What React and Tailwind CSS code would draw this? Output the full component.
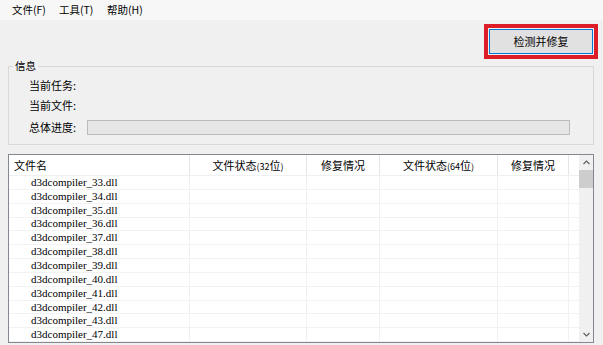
import React from "react";

const files = ["33","34","35","36","37","38","39","40","41","42","43","47"];

const cjk = { fontFamily: '"Noto Sans CJK SC", "Microsoft YaHei", sans-serif' };

function Head({ a, b }) {
  return (
    <span>
      文件状态<span className="text-[9px]">({a}</span>位<span className="text-[9px]">)</span>
    </span>
  );
}

export default function App() {
  return (
    <div className="w-[603px] h-[345px] bg-[#f0f0f0] overflow-hidden text-black text-[11px] leading-none" style={cjk}>
      {/* menu bar */}
      <div className="h-[20px] bg-[#f7f7f7] flex items-center pl-[12px] text-[10.5px]">
        <span className="w-[47px]">文件(F)</span>
        <span className="w-[48px]">工具(T)</span>
        <span>帮助(H)</span>
      </div>
      {/* button row */}
      <div className="flex justify-end pr-[5px] pt-[4px]">
        <div className="border-[4px] border-[#dc1c27] p-[1px]">
          <button className="w-[104px] h-[25px] bg-[#e1e1e1] border border-[#0078d7] text-[11px] flex items-center justify-center">
            检测并修复
          </button>
        </div>
      </div>
      {/* info group */}
      <div className="relative mx-[8px] mt-[7px] w-[586px] h-[79px] border border-[#d9d9d9] pl-[20px] pt-[8px]">
        <span className="absolute left-[4px] top-[-8px] px-[2px] bg-[#f0f0f0] text-[10.5px] leading-[14px]">信息</span>
        <div className="flex flex-col">
          <div className="h-[20px] flex items-center">当前任务:</div>
          <div className="h-[20px] flex items-center">当前文件:</div>
          <div className="h-[20px] mt-[2px] flex items-center">
            <span className="w-[58px]">总体进度:</span>
            <div className="w-[483px] h-[15px] bg-[#e6e6e6] border border-[#bcbcbc]"></div>
          </div>
        </div>
      </div>
      {/* list view */}
      <div className="mx-[8px] mt-[9px] w-[586px] h-[189px] border border-[#828790] bg-white flex overflow-hidden">
        <div className="flex-1 flex flex-col">
          <div className="h-[21px] shrink-0 flex items-center border-b border-[#f0f0f0] text-[11px]">
            <div className="w-[181px] h-full flex items-center pl-[5px] border-r border-[#e5e5e5]">文件名</div>
            <div className="w-[117px] h-full flex items-center justify-center border-r border-[#e5e5e5]"><Head a="32" /></div>
            <div className="w-[73px] h-full flex items-center justify-center border-r border-[#e5e5e5]">修复情况</div>
            <div className="w-[118px] h-full flex items-center justify-center border-r border-[#e5e5e5]"><Head a="64" /></div>
            <div className="w-[71px] h-full flex items-center justify-center border-r border-[#e5e5e5]">修复情况</div>
            <div className="flex-1"></div>
          </div>
          {files.map((n) => (
            <div key={n} className="h-[13.85px] shrink-0 flex border-b border-[#f2f2f2]">
              <div
                className="w-[181px] h-full flex items-center pl-[22px] border-r border-[#f0f0f0] text-[11px]"
                style={{ fontFamily: '"Liberation Serif", serif' }}
              >
                d3dcompiler_{n}.dll
              </div>
              <div className="w-[117px] h-full border-r border-[#f0f0f0]"></div>
              <div className="w-[73px] h-full border-r border-[#f0f0f0]"></div>
              <div className="w-[118px] h-full border-r border-[#f0f0f0]"></div>
              <div className="w-[71px] h-full border-r border-[#f0f0f0]"></div>
              <div className="flex-1"></div>
            </div>
          ))}
        </div>
        {/* scrollbar */}
        <div className="w-[14px] h-full bg-[#f0f0f0] flex flex-col items-center">
          <div className="h-[15px] w-full flex items-center justify-center">
            <svg width="7" height="5" viewBox="0 0 7 5"><path d="M0.5 4 L3.5 1 L6.5 4" stroke="#606060" strokeWidth="1.2" fill="none" /></svg>
          </div>
          <div className="w-full h-[18px] bg-[#cdcdcd]"></div>
          <div className="flex-1"></div>
          <div className="h-[15px] w-full flex items-center justify-center">
            <svg width="7" height="5" viewBox="0 0 7 5"><path d="M0.5 1 L3.5 4 L6.5 1" stroke="#606060" strokeWidth="1.2" fill="none" /></svg>
          </div>
        </div>
      </div>
    </div>
  );
}
